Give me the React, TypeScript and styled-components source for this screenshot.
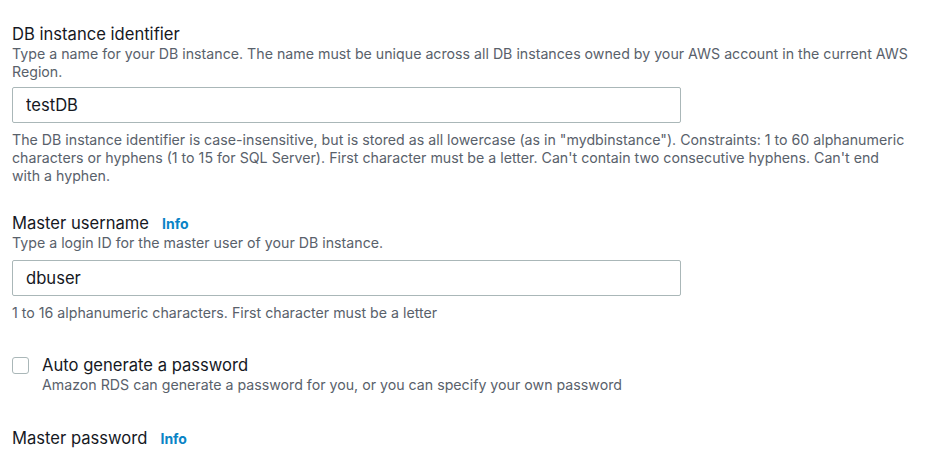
import React from "react";
import styled, { createGlobalStyle } from "styled-components";

const GlobalStyle = createGlobalStyle`
  body {
    margin: 0;
    background: #ffffff;
    font-family: Inter, "Noto Sans", sans-serif;
    -webkit-font-smoothing: antialiased;
  }
`;

const Page = styled.div`
  width: 897px;
  padding: 23px 0 0 12px;
  display: flex;
  flex-direction: column;
`;

const Field = styled.section<{ gap?: number }>`
  display: flex;
  flex-direction: column;
  margin-top: ${(p) => p.gap ?? 0}px;
`;

const LabelRow = styled.div`
  display: flex;
  align-items: baseline;
  gap: 13px;
`;

const Label = styled.label`
  font-size: 16.6px;
  line-height: 22px;
  color: #16191f;
  font-weight: 400;
`;

const InfoLink = styled.a`
  font-size: 14px;
  font-weight: 700;
  color: #0a84c6;
  text-decoration: none;
  cursor: pointer;
`;

const Description = styled.p`
  margin: 0;
  font-size: 14.2px;
  line-height: 18px;
  color: #59616b;
`;

const Constraint = styled.p`
  margin: 8px 0 0;
  font-size: 14.2px;
  line-height: 18px;
  color: #59616b;
`;

const Input = styled.input<{ top?: number }>`
  box-sizing: border-box;
  width: 669px;
  height: 36px;
  margin-top: ${(p) => p.top ?? 6}px;
  padding: 0 13px;
  border: 1px solid #aab7b8;
  border-radius: 2px;
  font-family: Inter, "Noto Sans", sans-serif;
  font-size: 16.6px;
  color: #16191f;
  background: #fff;
  outline: none;
`;

const CheckRow = styled.div`
  display: flex;
  align-items: flex-start;
  gap: 13px;
`;

const Box = styled.span`
  box-sizing: border-box;
  width: 17px;
  height: 17px;
  margin-top: 3px;
  border: 1px solid #aab7b8;
  border-radius: 3px;
  background: #fff;
  flex-shrink: 0;
`;

const CheckText = styled.div`
  display: flex;
  flex-direction: column;
`;

export default function App() {
  return (
    <>
      <GlobalStyle />
      <Page>
        <Field>
          <Label>DB instance identifier</Label>
          <Description>
            Type a name for your DB instance. The name must be unique across all DB instances owned by your AWS
            account in the current AWS Region.
          </Description>
          <Input defaultValue="testDB" />
          <Constraint>
            The DB instance identifier is case-insensitive, but is stored as all lowercase (as in "mydbinstance").
            Constraints: 1 to 60 alphanumeric characters or hyphens (1 to 15 for SQL Server). First character must be
            a letter. Can't contain two consecutive hyphens. Can't end with a hyphen.
          </Constraint>
        </Field>

        <Field gap={27}>
          <LabelRow>
            <Label>Master username</Label>
            <InfoLink>Info</InfoLink>
          </LabelRow>
          <Description>Type a login ID for the master user of your DB instance.</Description>
          <Input defaultValue="dbuser" top={8} />
          <Constraint>1 to 16 alphanumeric characters. First character must be a letter</Constraint>
        </Field>

        <Field gap={32}>
          <CheckRow>
            <Box />
            <CheckText>
              <Label>Auto generate a password</Label>
              <Description>Amazon RDS can generate a password for you, or you can specify your own password</Description>
            </CheckText>
          </CheckRow>
        </Field>

        <Field gap={33}>
          <LabelRow>
            <Label>Master password</Label>
            <InfoLink>Info</InfoLink>
          </LabelRow>
        </Field>
      </Page>
    </>
  );
}
